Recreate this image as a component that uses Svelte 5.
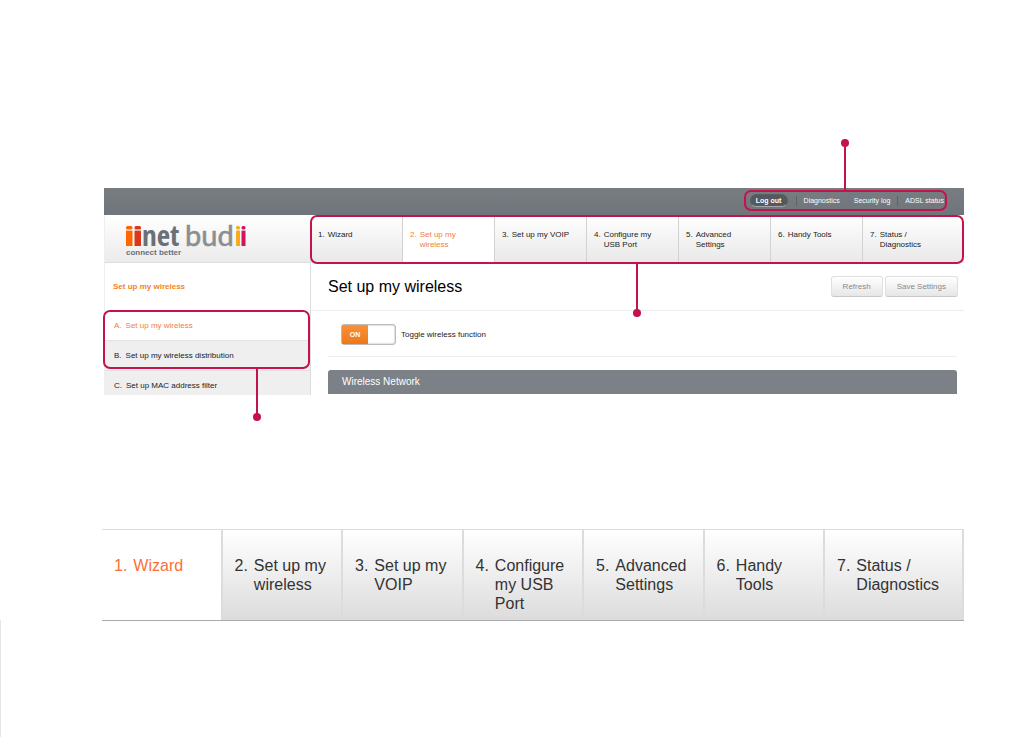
<script lang="ts">
  type Item = { mark: string; label: string };

  const tabs: Item[] = [
    { mark: '1.', label: 'Wizard' },
    { mark: '2.', label: 'Set up my wireless' },
    { mark: '3.', label: 'Set up my VOIP' },
    { mark: '4.', label: 'Configure my USB Port' },
    { mark: '5.', label: 'Advanced Settings' },
    { mark: '6.', label: 'Handy Tools' },
    { mark: '7.', label: 'Status / Diagnostics' },
  ];

  const sections: Item[] = [
    { mark: 'A.', label: 'Set up my wireless' },
    { mark: 'B.', label: 'Set up my wireless distribution' },
    { mark: 'C.', label: 'Set up MAC address filter' },
  ];

  let activeTab = $state(1);
  let activeSection = $state(0);
  let activeStep = $state(0);
  let wireless = $state(true);

  function pick(e: Event, set: () => void) {
    e.preventDefault();
    set();
  }
</script>

<div class="page">
  <div class="page-edge"></div>

  <div class="router">
    <div class="topbar">
      <nav class="util callout-box" aria-label="Account">
        <button class="logout" type="button">Log out</button>
        <a class="divided" href="#diagnostics">Diagnostics</a>
        <a href="#security">Security log</a>
        <a class="divided" href="#adsl">ADSL status</a>
        <span class="stem stem-util"></span>
      </nav>
    </div>

    <header class="header">
      <div class="brand">
        <svg width="124" height="38" viewBox="0 -3 124 38" role="img" aria-label="iinet budii connect better">
          <g fill="#f60">
            <rect x="1" y="3" width="6.5" height="3.6" rx="1.5" />
            <rect x="1" y="7.6" width="6.5" height="15.4" />
          </g>
          <g fill="#d9381e">
            <rect x="9.5" y="3" width="6.5" height="3.6" rx="1.5" />
            <rect x="9.5" y="7.6" width="6.5" height="15.4" />
          </g>
          <text class="logo-net" x="17" y="23">net</text>
          <text class="logo-bud" x="60" y="23">bud</text>
          <g fill="#fbab18">
            <rect x="111" y="3" width="4" height="3.6" rx="1.5" />
            <rect x="111" y="7.6" width="4" height="15.4" />
          </g>
          <g fill="#d4145a">
            <rect x="116.5" y="3" width="4" height="3.6" rx="1.5" />
            <rect x="116.5" y="7.6" width="4" height="15.4" />
          </g>
          <text class="logo-tag" x="1" y="32">connect better</text>
        </svg>
      </div>

      <nav class="tabs" aria-label="Main">
        {#each tabs as tab, i}
          <a href="#tab" class="tab" class:active={activeTab === i} onclick={(e) => pick(e, () => (activeTab = i))}>
            <span>{tab.mark}</span>
            <span>{tab.label}</span>
          </a>
        {/each}
        <span class="callout-box frame frame-tabs"></span>
        <span class="stem stem-tabs"></span>
      </nav>
    </header>

    <div class="body">
      <aside class="sidebar">
        <h2>Set up my wireless</h2>
        <nav class="sections" aria-label="Wireless">
          {#each sections as section, i}
            <a href="#section" class:active={activeSection === i} onclick={(e) => pick(e, () => (activeSection = i))}>
              <span>{section.mark}</span>
              <span>{section.label}</span>
            </a>
          {/each}
          <span class="callout-box frame frame-sections"></span>
          <span class="stem stem-sections"></span>
        </nav>
      </aside>

      <main class="main">
        <div class="title-row">
          <h1>Set up my wireless</h1>
          <button class="btn" type="button">Refresh</button>
          <button class="btn" type="button">Save Settings</button>
        </div>
        <div class="toggle-row">
          <label class="toggle-label">
            <input type="checkbox" class="toggle-input" bind:checked={wireless} />
            <span class="toggle-track" class:off={!wireless}>
              <span class="toggle-state">{wireless ? 'ON' : 'OFF'}</span>
            </span>
            Toggle wireless function
          </label>
        </div>
        <h3>Wireless Network</h3>
      </main>
    </div>
  </div>

  <nav class="steps" aria-label="Steps">
    {#each tabs as tab, i}
      <a href="#step" class="step" class:active={activeStep === i} onclick={(e) => pick(e, () => (activeStep = i))}>
        <span>{tab.mark}</span>
        <span>{tab.label}</span>
      </a>
    {/each}
  </nav>
</div>

<style>
  :global(body) {
    margin: 0;
    background: #fff;
  }

  .page {
    --callout: #c4124a;
    position: relative;
    box-sizing: border-box;
    min-height: 100vh;
    padding: 188px 56px 116px 102px;
    font-family: 'Liberation Sans', Arial, sans-serif;
    font-size: 8px;
    line-height: 10px;
    color: #222;
  }

  .page-edge {
    position: absolute;
    left: 0;
    bottom: 0;
    width: 1px;
    height: 117px;
    background: #e6e6e6;
  }

  a {
    color: inherit;
    text-decoration: none;
  }

  h1,
  h2,
  h3 {
    margin: 0;
  }

  .router {
    margin-left: 2px;
  }

  /* callouts */
  .callout-box {
    box-sizing: border-box;
    border: 2px solid var(--callout);
    border-radius: 7px;
  }

  .frame {
    position: absolute;
    pointer-events: none;
  }

  .frame-tabs {
    inset: 0 0 -1px -1px;
  }

  .frame-sections {
    top: -1px;
    left: -2px;
    right: 0;
    height: 59px;
  }

  .stem {
    position: absolute;
    width: 2px;
    background: var(--callout);
  }

  .stem::after {
    content: '';
    position: absolute;
    left: -3px;
    width: 8px;
    height: 8px;
    border-radius: 50%;
    background: var(--callout);
  }

  .stem-util {
    left: 98px;
    bottom: 100%;
    height: 49px;
  }

  .stem-util::after {
    top: -4px;
  }

  .stem-tabs {
    left: calc(50% - 2px);
    top: 100%;
    height: 50px;
  }

  .stem-sections {
    left: 151px;
    top: 58px;
    height: 48px;
  }

  .stem-tabs::after,
  .stem-sections::after {
    bottom: -4px;
  }

  /* top bar */
  .topbar {
    box-sizing: border-box;
    display: flex;
    justify-content: flex-end;
    align-items: flex-start;
    height: 27px;
    padding: 2px 17px 0 0;
    background: linear-gradient(#787d82, #70757b);
  }

  .util {
    position: relative;
    display: flex;
    align-items: center;
    height: 21px;
    padding: 0 1px 0 4px;
    font-size: 7px;
    color: #fff;
  }

  .util a {
    padding: 0 7px;
  }

  .util a:last-of-type {
    padding-right: 0;
  }

  .util .divided {
    border-left: 1px solid #5f646a;
  }

  .logout {
    box-sizing: border-box;
    width: 38px;
    height: 13px;
    margin-right: 8px;
    padding: 0;
    border: 1px solid #5b6065;
    border-bottom-color: #a3a7ab;
    border-radius: 7px;
    background: #54595e;
    font: bold 7px/10px 'Liberation Sans', Arial, sans-serif;
    color: #fff;
  }

  /* logo and tabs */
  .header {
    display: flex;
    height: 48px;
  }

  .brand {
    box-sizing: border-box;
    flex: 0 0 207px;
    padding: 5px 0 0 20px;
    border-bottom: 1px solid #ddd;
    border-left: 1px solid #eee;
    background: linear-gradient(#fff, #ebebeb);
  }

  .brand svg {
    display: block;
    overflow: visible;
  }

  .logo-net {
    font: bold 29px 'Liberation Sans Narrow', 'Open Sans Condensed', 'Liberation Sans', sans-serif;
    fill: #6a7077;
  }

  .logo-bud {
    font: 29px Lato, sans-serif;
    fill: #8c8e91;
    stroke: #8c8e91;
    stroke-width: 0.6px;
  }

  .logo-tag {
    font: bold 8px 'Liberation Sans', sans-serif;
    fill: #6a7077;
  }

  .tabs {
    position: relative;
    display: grid;
    flex: 1;
    grid-template-columns: repeat(6, 92fr) 101fr;
  }

  .tab {
    display: flex;
    gap: 3px;
    padding: 15px 16px 0 7px;
    border-right: 1px solid #d2d2d2;
    background: linear-gradient(#fff, #e8e8ea);
  }

  .tab:nth-child(7) {
    border-right: 0;
  }

  .tab.active,
  .sections .active {
    background: #fff;
    color: #f0803c;
  }

  /* body */
  .body {
    display: flex;
  }

  .sidebar {
    box-sizing: border-box;
    flex: 0 0 207px;
    border-left: 1px solid #eee;
    border-right: 1px solid #ddd;
  }

  .sidebar h2 {
    padding: 19px 8px;
    font-size: 8px;
    line-height: 10px;
    color: #f5821f;
  }

  .sections {
    position: relative;
  }

  .sections a {
    display: flex;
    gap: 4px;
    padding: 10px 9px 9px;
    border-bottom: 1px solid #e2e2e2;
    background: #efefef;
  }

  .sections a:last-of-type {
    padding-bottom: 4px;
    border-bottom: 0;
  }

  .main {
    flex: 1;
    padding-right: 7px;
  }

  .title-row {
    display: flex;
    align-items: center;
    gap: 2px;
    height: 47px;
    margin-right: -7px;
    padding: 0 6px 0 17px;
    border-bottom: 1px solid #eee;
  }

  h1 {
    flex: 1;
    font-size: 16px;
    font-weight: normal;
    line-height: 20px;
    color: #000;
  }

  .btn {
    height: 21px;
    padding: 0 11px;
    border: 1px solid #e0e0e0;
    border-bottom-color: #c8c8c8;
    border-radius: 3px;
    background: linear-gradient(#fff, #e6e6e6);
    font: 8px/10px 'Liberation Sans', Arial, sans-serif;
    color: #8a8a8a;
  }

  .toggle-row {
    margin-left: 17px;
    padding: 13px 13px 11px;
    border-bottom: 1px solid #eee;
  }

  .toggle-label {
    display: flex;
    align-items: center;
    gap: 5px;
    width: max-content;
  }

  .toggle-input {
    position: absolute;
    width: 0;
    height: 0;
    opacity: 0;
  }

  .toggle-track {
    box-sizing: border-box;
    display: flex;
    width: 55px;
    height: 21px;
    border: 1px solid #bbb;
    border-radius: 3px;
    background: #fff;
    box-shadow: inset 0 0 2px #999;
  }

  .toggle-track.off {
    justify-content: flex-end;
  }

  .toggle-state {
    width: 26px;
    background: linear-gradient(#f8923a, #f0761a);
    font-size: 7px;
    font-weight: bold;
    line-height: 20px;
    text-align: center;
    color: #fff;
  }

  h3 {
    margin: 13px 0 0 17px;
    padding: 0 14px;
    border-radius: 3px 3px 0 0;
    background: #7b8186;
    font-size: 10px;
    font-weight: normal;
    line-height: 24px;
    color: #fff;
  }

  /* large step bar */
  .steps {
    display: grid;
    grid-template-columns: repeat(6, 241fr) 278fr;
    margin-top: 134px;
    border-top: 1px solid #ddd;
    border-bottom: 1px solid #aaa;
    font-size: 16px;
    line-height: 19px;
    color: #333;
  }

  .step {
    box-sizing: border-box;
    display: flex;
    gap: 6px;
    min-height: 90px;
    padding: 26px 8px 6px 12px;
    border-right: 2px solid #dcdcdc;
    background: linear-gradient(#fff, #dcdcdc);
  }

  .step.active {
    background: #fff;
    color: #f9703a;
  }
</style>
